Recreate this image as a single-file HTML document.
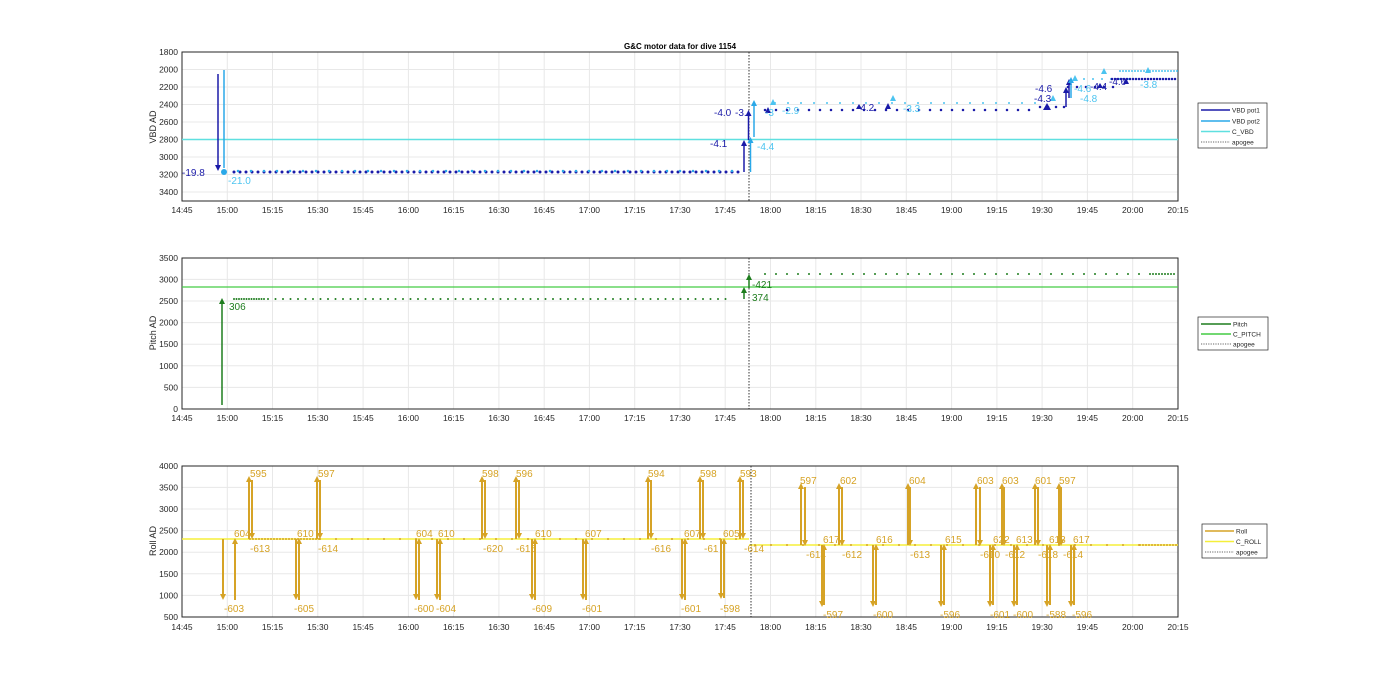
<!DOCTYPE html>
<html><head><meta charset="utf-8"><style>
html,body{margin:0;padding:0;background:#fff;}
svg{display:block;font-family:"Liberation Sans",sans-serif;}
</style></head><body>
<svg width="1400" height="693" viewBox="0 0 1400 693" xmlns="http://www.w3.org/2000/svg">
<defs>
<marker id="ab" markerWidth="4" markerHeight="4" refX="2" refY="2" orient="auto" markerUnits="strokeWidth"><path d="M0,0 L4,2 L0,4z" fill="#1a1aa8"/></marker>
<marker id="alb" markerWidth="4" markerHeight="4" refX="2" refY="2" orient="auto" markerUnits="strokeWidth"><path d="M0,0 L4,2 L0,4z" fill="#2aa8e8"/></marker>
<marker id="ag" markerWidth="4" markerHeight="4" refX="2" refY="2" orient="auto" markerUnits="strokeWidth"><path d="M0,0 L4,2 L0,4z" fill="#1e7d1e"/></marker>
<marker id="ay" markerWidth="3" markerHeight="3" refX="1.5" refY="1.5" orient="auto" markerUnits="strokeWidth"><path d="M0,0 L3,1.5 L0,3z" fill="#d6a326"/></marker>
</defs>
<rect width="1400" height="693" fill="#fff"/>

<g stroke="#e8e8e8" stroke-width="1">
<path d="M227.3 52V201M272.5 52V201M317.8 52V201M363.1 52V201M408.4 52V201M453.6 52V201M498.9 52V201M544.2 52V201M589.4 52V201M634.7 52V201M680 52V201M725.2 52V201M770.5 52V201M815.8 52V201M861 52V201M906.3 52V201M951.6 52V201M996.9 52V201M1042.1 52V201M1087.4 52V201M1132.7 52V201"/>
<path d="M227.3 258V409M272.5 258V409M317.8 258V409M363.1 258V409M408.4 258V409M453.6 258V409M498.9 258V409M544.2 258V409M589.4 258V409M634.7 258V409M680 258V409M725.2 258V409M770.5 258V409M815.8 258V409M861 258V409M906.3 258V409M951.6 258V409M996.9 258V409M1042.1 258V409M1087.4 258V409M1132.7 258V409"/>
<path d="M227.3 466V617M272.5 466V617M317.8 466V617M363.1 466V617M408.4 466V617M453.6 466V617M498.9 466V617M544.2 466V617M589.4 466V617M634.7 466V617M680 466V617M725.2 466V617M770.5 466V617M815.8 466V617M861 466V617M906.3 466V617M951.6 466V617M996.9 466V617M1042.1 466V617M1087.4 466V617M1132.7 466V617"/>
<path d="M182 69.5H1178M182 87H1178M182 104.5H1178M182 122H1178M182 139.5H1178M182 157H1178M182 174.5H1178M182 192H1178"/>
<path d="M182 387.4H1178M182 365.8H1178M182 344.2H1178M182 322.6H1178M182 301H1178M182 279.4H1178"/>
<path d="M182 595.4H1178M182 573.8H1178M182 552.2H1178M182 530.6H1178M182 509H1178M182 487.4H1178"/>
</g>
<g fill="none" stroke="#262626" stroke-width="1">
<rect x="182" y="52" width="996" height="149"/>
<rect x="182" y="258" width="996" height="151"/>
<rect x="182" y="466" width="996" height="151"/>
</g>

<text x="680" y="49" font-size="8" font-weight="bold" text-anchor="middle" fill="#000">G&amp;C motor data for dive 1154</text>

<g font-size="9" fill="#262626">
<text transform="translate(156,127) rotate(-90)" text-anchor="middle">VBD AD</text>
<text transform="translate(156,333) rotate(-90)" text-anchor="middle">Pitch AD</text>
<text transform="translate(156,541) rotate(-90)" text-anchor="middle">Roll AD</text>
</g>
<g font-size="8.5" fill="#262626" text-anchor="end">
<text x="178" y="55">1800</text><text x="178" y="72.5">2000</text><text x="178" y="90">2200</text><text x="178" y="107.5">2400</text><text x="178" y="125">2600</text><text x="178" y="142.5">2800</text><text x="178" y="160">3000</text><text x="178" y="177.5">3200</text><text x="178" y="195">3400</text>
<text x="178" y="261">3500</text><text x="178" y="282.4">3000</text><text x="178" y="304">2500</text><text x="178" y="325.6">2000</text><text x="178" y="347.2">1500</text><text x="178" y="368.8">1000</text><text x="178" y="390.4">500</text><text x="178" y="412">0</text>
<text x="178" y="469">4000</text><text x="178" y="490.4">3500</text><text x="178" y="512">3000</text><text x="178" y="533.6">2500</text><text x="178" y="555.2">2000</text><text x="178" y="576.8">1500</text><text x="178" y="598.4">1000</text><text x="178" y="620">500</text>
</g>
<g font-size="8.5" fill="#262626" text-anchor="middle">
<text x="182" y="213">14:45</text><text x="227.3" y="213">15:00</text><text x="272.5" y="213">15:15</text><text x="317.8" y="213">15:30</text><text x="363.1" y="213">15:45</text><text x="408.4" y="213">16:00</text><text x="453.6" y="213">16:15</text><text x="498.9" y="213">16:30</text><text x="544.2" y="213">16:45</text><text x="589.4" y="213">17:00</text><text x="634.7" y="213">17:15</text><text x="680" y="213">17:30</text><text x="725.2" y="213">17:45</text><text x="770.5" y="213">18:00</text><text x="815.8" y="213">18:15</text><text x="861" y="213">18:30</text><text x="906.3" y="213">18:45</text><text x="951.6" y="213">19:00</text><text x="996.9" y="213">19:15</text><text x="1042.1" y="213">19:30</text><text x="1087.4" y="213">19:45</text><text x="1132.7" y="213">20:00</text><text x="1178" y="213">20:15</text>
<text x="182" y="421">14:45</text><text x="227.3" y="421">15:00</text><text x="272.5" y="421">15:15</text><text x="317.8" y="421">15:30</text><text x="363.1" y="421">15:45</text><text x="408.4" y="421">16:00</text><text x="453.6" y="421">16:15</text><text x="498.9" y="421">16:30</text><text x="544.2" y="421">16:45</text><text x="589.4" y="421">17:00</text><text x="634.7" y="421">17:15</text><text x="680" y="421">17:30</text><text x="725.2" y="421">17:45</text><text x="770.5" y="421">18:00</text><text x="815.8" y="421">18:15</text><text x="861" y="421">18:30</text><text x="906.3" y="421">18:45</text><text x="951.6" y="421">19:00</text><text x="996.9" y="421">19:15</text><text x="1042.1" y="421">19:30</text><text x="1087.4" y="421">19:45</text><text x="1132.7" y="421">20:00</text><text x="1178" y="421">20:15</text>
<text x="182" y="630">14:45</text><text x="227.3" y="630">15:00</text><text x="272.5" y="630">15:15</text><text x="317.8" y="630">15:30</text><text x="363.1" y="630">15:45</text><text x="408.4" y="630">16:00</text><text x="453.6" y="630">16:15</text><text x="498.9" y="630">16:30</text><text x="544.2" y="630">16:45</text><text x="589.4" y="630">17:00</text><text x="634.7" y="630">17:15</text><text x="680" y="630">17:30</text><text x="725.2" y="630">17:45</text><text x="770.5" y="630">18:00</text><text x="815.8" y="630">18:15</text><text x="861" y="630">18:30</text><text x="906.3" y="630">18:45</text><text x="951.6" y="630">19:00</text><text x="996.9" y="630">19:15</text><text x="1042.1" y="630">19:30</text><text x="1087.4" y="630">19:45</text><text x="1132.7" y="630">20:00</text><text x="1178" y="630">20:15</text>
</g>

<line x1="182" y1="139.5" x2="1178" y2="139.5" stroke="#5fe0e0" stroke-width="1.5"/>
<line x1="749" y1="52" x2="749" y2="201" stroke="#333" stroke-width="1" stroke-dasharray="1.5 1.5"/>
<line x1="218" y1="74" x2="218" y2="168" stroke="#1a1aa8" stroke-width="1.5" marker-end="url(#ab)"/>
<line x1="224" y1="70" x2="224" y2="168" stroke="#2aa8e8" stroke-width="1.5"/>
<circle cx="224" cy="172" r="3" fill="#2aa8e8"/>
<g stroke-linecap="round" fill="none">
<line x1="234" y1="172" x2="742" y2="172" stroke="#1a1aa8" stroke-width="3" stroke-dasharray="0 6"/>
<line x1="238" y1="171" x2="742" y2="171" stroke="#2aa8e8" stroke-width="2.5" stroke-dasharray="0 13"/>
<line x1="765" y1="110" x2="1040" y2="110" stroke="#1a1aa8" stroke-width="2.5" stroke-dasharray="0 11"/>
<line x1="775" y1="103" x2="1040" y2="103" stroke="#4cc4f0" stroke-width="2" stroke-dasharray="0 13"/>
<line x1="1040" y1="107" x2="1065" y2="107" stroke="#1a1aa8" stroke-width="2.5" stroke-dasharray="0 8"/>
<line x1="1068" y1="87" x2="1120" y2="87" stroke="#1a1aa8" stroke-width="2.5" stroke-dasharray="0 9"/>
<line x1="1075" y1="79" x2="1130" y2="79" stroke="#4cc4f0" stroke-width="2" stroke-dasharray="0 9"/>
<line x1="1112" y1="79" x2="1178" y2="79" stroke="#1a1aa8" stroke-width="2.5" stroke-dasharray="0 3"/>
<line x1="1120" y1="71" x2="1178" y2="71" stroke="#4cc4f0" stroke-width="2" stroke-dasharray="0 3"/>
</g>
<g stroke-width="1.5">
<line x1="744" y1="172" x2="744" y2="143" stroke="#1a1aa8" marker-end="url(#ab)"/>
<line x1="748.5" y1="140" x2="748.5" y2="113" stroke="#1a1aa8" marker-end="url(#ab)"/>
<line x1="750.5" y1="172" x2="750.5" y2="140" stroke="#2aa8e8" marker-end="url(#alb)"/>
<line x1="754" y1="137" x2="754" y2="103" stroke="#2aa8e8" marker-end="url(#alb)"/>
<line x1="1066" y1="107" x2="1066" y2="90" stroke="#1a1aa8" marker-end="url(#ab)"/>
<line x1="1069" y1="98" x2="1069" y2="82" stroke="#1a1aa8" marker-end="url(#ab)"/>
<line x1="1071" y1="98" x2="1071" y2="80" stroke="#2aa8e8" marker-end="url(#alb)"/>
</g>
<g fill="#1a1aa8">
<path d="M765 113l3-6 3 6z"/><path d="M885 109l3-6 3 6z"/><path d="M1043 110l4-7 4 7z"/><path d="M1123 84l3-6 3 6z"/><path d="M1097 88l3-5 3 5z"/><path d="M856 109l3-5 3 5z"/>
</g>
<g fill="#4cc4f0">
<path d="M770 105l3-6 3 6z"/><path d="M890 101l3-6 3 6z"/><path d="M1050 101l3-6 3 6z"/><path d="M1072 81l3-6 3 6z"/><path d="M1101 74l3-6 3 6z"/><path d="M1145 73l3-6 3 6z"/>
</g>
<g font-size="10">
<g fill="#1a1aa8">
<text x="182" y="176">-19.8</text><text x="710" y="147">-4.1</text><text x="714" y="116">-4.0</text><text x="735" y="116">-3.</text><text x="1035" y="92">-4.6</text><text x="1034" y="102">-4.3</text><text x="1090" y="90">-4.4</text><text x="857" y="111">-4.2</text><text x="1109" y="85">-4.6</text>
</g>
<g fill="#4cc4f0">
<text x="228" y="184">-21.0</text><text x="757" y="150">-4.4</text><text x="765" y="116">-3</text><text x="782" y="114">-2.9</text><text x="903" y="112">-3.3</text><text x="1080" y="102">-4.8</text><text x="1074" y="92">-4.6</text><text x="1140" y="88">-3.8</text>
</g>
</g>
<rect x="1198" y="103" width="69" height="45" fill="#fff" stroke="#262626" stroke-width="0.7"/>
<g stroke-width="1.5"><line x1="1201" y1="110" x2="1230" y2="110" stroke="#1a1aa8"/><line x1="1201" y1="121" x2="1230" y2="121" stroke="#2aa8e8"/><line x1="1201" y1="131.5" x2="1230" y2="131.5" stroke="#5fe0e0"/><line x1="1201" y1="142" x2="1230" y2="142" stroke="#333" stroke-width="0.8" stroke-dasharray="1.2 1.2"/></g>
<g font-size="6.5" fill="#262626"><text x="1232" y="112.5">VBD pot1</text><text x="1232" y="123.5">VBD pot2</text><text x="1232" y="134">C_VBD</text><text x="1232" y="144.5">apogee</text></g>

<line x1="182" y1="287" x2="1178" y2="287" stroke="#44cc44" stroke-width="1.2"/>
<line x1="749" y1="258" x2="749" y2="409" stroke="#333" stroke-width="1" stroke-dasharray="1.5 1.5"/>
<line x1="222" y1="405" x2="222" y2="301" stroke="#1e7d1e" stroke-width="1.5" marker-end="url(#ag)"/>
<line x1="744" y1="299" x2="744" y2="290" stroke="#1e7d1e" stroke-width="1.5" marker-end="url(#ag)"/>
<line x1="749" y1="288" x2="749" y2="277" stroke="#1e7d1e" stroke-width="1.5" marker-end="url(#ag)"/>
<g stroke-linecap="round" stroke="#1e7d1e" fill="none">
<line x1="234" y1="299" x2="265" y2="299" stroke-width="2" stroke-dasharray="0 2.5"/>
<line x1="268" y1="299" x2="730" y2="299" stroke-width="2" stroke-dasharray="0 7.5"/>
<line x1="765" y1="274" x2="1150" y2="274" stroke-width="2" stroke-dasharray="0 11"/>
<line x1="1150" y1="274" x2="1176" y2="274" stroke-width="2" stroke-dasharray="0 3"/>
</g>
<g font-size="10" fill="#1e7d1e"><text x="229" y="310">306</text><text x="752" y="288">-421</text><text x="752" y="301">374</text></g>
<rect x="1198" y="317" width="70" height="33" fill="#fff" stroke="#262626" stroke-width="0.7"/>
<g stroke-width="1.5"><line x1="1201" y1="324" x2="1231" y2="324" stroke="#1e7d1e"/><line x1="1201" y1="334" x2="1231" y2="334" stroke="#44cc44"/><line x1="1201" y1="344" x2="1231" y2="344" stroke="#333" stroke-width="0.8" stroke-dasharray="1.2 1.2"/></g>
<g font-size="6.5" fill="#262626"><text x="1233" y="326.5">Pitch</text><text x="1233" y="336.5">C_PITCH</text><text x="1233" y="346.5">apogee</text></g>

<line x1="182" y1="539" x2="749" y2="539" stroke="#f5ef3a" stroke-width="1.5"/>
<line x1="749" y1="545" x2="1178" y2="545" stroke="#f5ef3a" stroke-width="1.5"/>
<line x1="751" y1="466" x2="751" y2="617" stroke="#333" stroke-width="1" stroke-dasharray="1.5 1.5"/>
<g stroke-linecap="round" stroke="#d6a326" fill="none" stroke-width="2">
<line x1="250" y1="539" x2="320" y2="539" stroke-dasharray="0 3"/>
<line x1="320" y1="539" x2="745" y2="539" stroke-dasharray="0 16"/>
<line x1="755" y1="545" x2="1140" y2="545" stroke-dasharray="0 16"/>
<line x1="1140" y1="545" x2="1177" y2="545" stroke-dasharray="0 3"/>
</g>
<g stroke="#d6a326" stroke-width="2">
<line x1="223" y1="539" x2="223" y2="597" marker-end="url(#ay)"/>
<line x1="296" y1="539" x2="296" y2="597" marker-end="url(#ay)"/>
<line x1="416" y1="539" x2="416" y2="597" marker-end="url(#ay)"/>
<line x1="437" y1="539" x2="437" y2="597" marker-end="url(#ay)"/>
<line x1="532" y1="539" x2="532" y2="597" marker-end="url(#ay)"/>
<line x1="583" y1="539" x2="583" y2="597" marker-end="url(#ay)"/>
<line x1="682" y1="539" x2="682" y2="597" marker-end="url(#ay)"/>
<line x1="721" y1="539" x2="721" y2="596" marker-end="url(#ay)"/>
<line x1="822" y1="545" x2="822" y2="604" marker-end="url(#ay)"/>
<line x1="873" y1="545" x2="873" y2="604" marker-end="url(#ay)"/>
<line x1="941" y1="545" x2="941" y2="604" marker-end="url(#ay)"/>
<line x1="990" y1="545" x2="990" y2="604" marker-end="url(#ay)"/>
<line x1="1014" y1="545" x2="1014" y2="604" marker-end="url(#ay)"/>
<line x1="1047" y1="545" x2="1047" y2="604" marker-end="url(#ay)"/>
<line x1="1071" y1="545" x2="1071" y2="604" marker-end="url(#ay)"/>
<line x1="235" y1="600" x2="235" y2="541" marker-end="url(#ay)"/>
<line x1="299" y1="600" x2="299" y2="541" marker-end="url(#ay)"/>
<line x1="419" y1="600" x2="419" y2="541" marker-end="url(#ay)"/>
<line x1="440" y1="600" x2="440" y2="541" marker-end="url(#ay)"/>
<line x1="535" y1="600" x2="535" y2="541" marker-end="url(#ay)"/>
<line x1="586" y1="600" x2="586" y2="541" marker-end="url(#ay)"/>
<line x1="685" y1="600" x2="685" y2="541" marker-end="url(#ay)"/>
<line x1="724" y1="598" x2="724" y2="541" marker-end="url(#ay)"/>
<line x1="824" y1="605" x2="824" y2="547" marker-end="url(#ay)"/>
<line x1="876" y1="605" x2="876" y2="547" marker-end="url(#ay)"/>
<line x1="944" y1="605" x2="944" y2="547" marker-end="url(#ay)"/>
<line x1="993" y1="605" x2="993" y2="547" marker-end="url(#ay)"/>
<line x1="1017" y1="605" x2="1017" y2="547" marker-end="url(#ay)"/>
<line x1="1050" y1="605" x2="1050" y2="547" marker-end="url(#ay)"/>
<line x1="1074" y1="605" x2="1074" y2="547" marker-end="url(#ay)"/>
<line x1="249" y1="539" x2="249" y2="479" marker-end="url(#ay)"/>
<line x1="317" y1="539" x2="317" y2="479" marker-end="url(#ay)"/>
<line x1="482" y1="539" x2="482" y2="479" marker-end="url(#ay)"/>
<line x1="516" y1="539" x2="516" y2="479" marker-end="url(#ay)"/>
<line x1="648" y1="539" x2="648" y2="479" marker-end="url(#ay)"/>
<line x1="700" y1="539" x2="700" y2="479" marker-end="url(#ay)"/>
<line x1="740" y1="539" x2="740" y2="479" marker-end="url(#ay)"/>
<line x1="801" y1="545" x2="801" y2="486" marker-end="url(#ay)"/>
<line x1="839" y1="545" x2="839" y2="486" marker-end="url(#ay)"/>
<line x1="908" y1="545" x2="908" y2="486" marker-end="url(#ay)"/>
<line x1="976" y1="545" x2="976" y2="486" marker-end="url(#ay)"/>
<line x1="1002" y1="545" x2="1002" y2="486" marker-end="url(#ay)"/>
<line x1="1035" y1="545" x2="1035" y2="486" marker-end="url(#ay)"/>
<line x1="1059" y1="545" x2="1059" y2="486" marker-end="url(#ay)"/>
<line x1="252" y1="480" x2="252" y2="536" marker-end="url(#ay)"/>
<line x1="320" y1="480" x2="320" y2="536" marker-end="url(#ay)"/>
<line x1="485" y1="480" x2="485" y2="536" marker-end="url(#ay)"/>
<line x1="519" y1="480" x2="519" y2="536" marker-end="url(#ay)"/>
<line x1="651" y1="480" x2="651" y2="536" marker-end="url(#ay)"/>
<line x1="703" y1="480" x2="703" y2="536" marker-end="url(#ay)"/>
<line x1="743" y1="480" x2="743" y2="536" marker-end="url(#ay)"/>
<line x1="805" y1="487" x2="805" y2="543" marker-end="url(#ay)"/>
<line x1="842" y1="487" x2="842" y2="543" marker-end="url(#ay)"/>
<line x1="910" y1="487" x2="910" y2="543" marker-end="url(#ay)"/>
<line x1="980" y1="487" x2="980" y2="543" marker-end="url(#ay)"/>
<line x1="1004" y1="487" x2="1004" y2="543" marker-end="url(#ay)"/>
<line x1="1038" y1="487" x2="1038" y2="543" marker-end="url(#ay)"/>
<line x1="1061" y1="487" x2="1061" y2="543" marker-end="url(#ay)"/>
</g>
<g font-size="10" fill="#d6a326">
<text x="224" y="612">-603</text><text x="234" y="537">604</text><text x="250" y="477">595</text><text x="250" y="552">-613</text>
<text x="294" y="612">-605</text><text x="297" y="537">610</text><text x="318" y="477">597</text><text x="318" y="552">-614</text>
<text x="414" y="612">-600</text><text x="416" y="537">604</text><text x="436" y="612">-604</text><text x="438" y="537">610</text>
<text x="482" y="477">598</text><text x="483" y="552">-620</text><text x="516" y="477">596</text><text x="516" y="552">-615</text>
<text x="532" y="612">-609</text><text x="535" y="537">610</text><text x="582" y="612">-601</text><text x="585" y="537">607</text>
<text x="648" y="477">594</text><text x="651" y="552">-616</text><text x="681" y="612">-601</text><text x="684" y="537">607</text>
<text x="700" y="477">598</text><text x="704" y="552">-61</text><text x="720" y="612">-598</text><text x="723" y="537">605</text>
<text x="740" y="477">593</text><text x="744" y="552">-614</text>
<text x="800" y="484">597</text><text x="806" y="558">-614</text><text x="823" y="618">-597</text><text x="823" y="543">617</text>
<text x="840" y="484">602</text><text x="842" y="558">-612</text><text x="873" y="618">-600</text><text x="876" y="543">616</text>
<text x="909" y="484">604</text><text x="910" y="558">-613</text><text x="940" y="618">-596</text><text x="945" y="543">615</text>
<text x="977" y="484">603</text><text x="980" y="558">-610</text><text x="990" y="618">-601</text><text x="993" y="543">622</text>
<text x="1002" y="484">603</text><text x="1005" y="558">-612</text><text x="1013" y="618">-600</text><text x="1016" y="543">613</text>
<text x="1035" y="484">601</text><text x="1038" y="558">-618</text><text x="1046" y="618">-588</text><text x="1049" y="543">613</text>
<text x="1059" y="484">597</text><text x="1063" y="558">-614</text><text x="1072" y="618">-596</text><text x="1073" y="543">617</text>
</g>
<rect x="1202" y="524" width="65" height="34" fill="#fff" stroke="#262626" stroke-width="0.7"/>
<g stroke-width="1.5"><line x1="1205" y1="531" x2="1234" y2="531" stroke="#d6a326"/><line x1="1205" y1="541.5" x2="1234" y2="541.5" stroke="#f5ef3a"/><line x1="1205" y1="552" x2="1234" y2="552" stroke="#333" stroke-width="0.8" stroke-dasharray="1.2 1.2"/></g>
<g font-size="6.5" fill="#262626"><text x="1236" y="533.5">Roll</text><text x="1236" y="544">C_ROLL</text><text x="1236" y="554.5">apogee</text></g>
</svg>
</body></html>
